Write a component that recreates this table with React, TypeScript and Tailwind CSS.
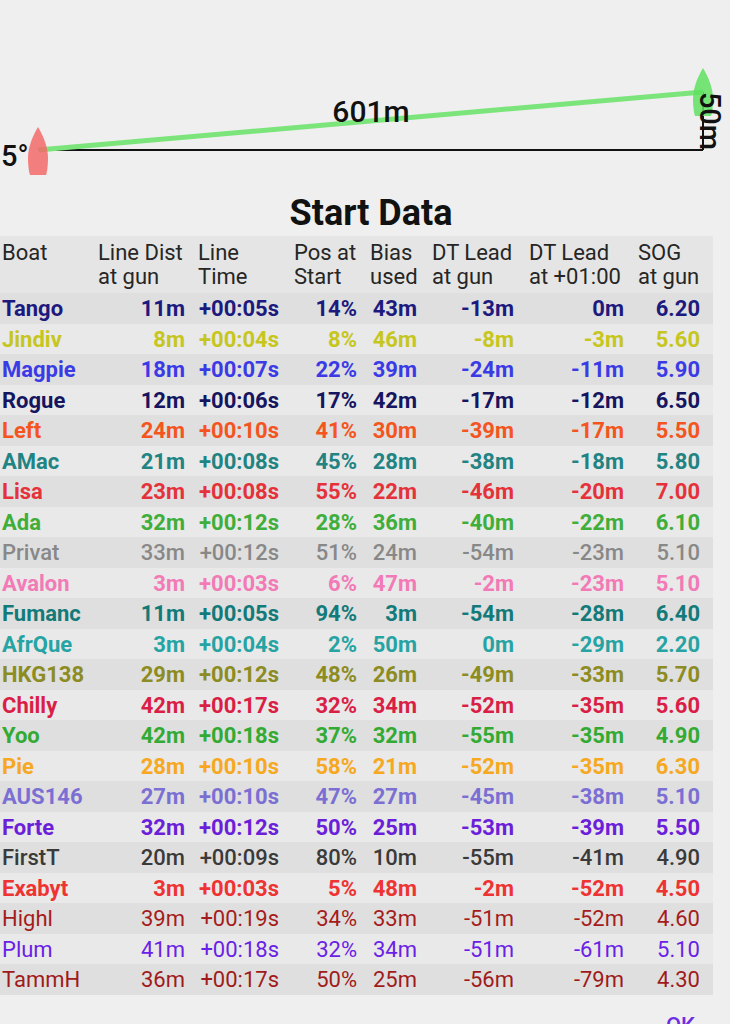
import React from 'react';

type Weight = 'bold' | 'medium' | 'normal';

interface BoatRow {
  name: string;
  dist: string;
  time: string;
  pos: string;
  bias: string;
  leadGun: string;
  leadMin: string;
  sog: string;
  color: string;
  weight: Weight;
}

const rows: BoatRow[] = [
  { name: 'Tango', dist: '11m', time: '+00:05s', pos: '14%', bias: '43m', leadGun: '-13m', leadMin: '0m', sog: '6.20', color: 'text-[#1c1a7e]', weight: 'bold' },
  { name: 'Jindiv', dist: '8m', time: '+00:04s', pos: '8%', bias: '46m', leadGun: '-8m', leadMin: '-3m', sog: '5.60', color: 'text-[#c6c61e]', weight: 'bold' },
  { name: 'Magpie', dist: '18m', time: '+00:07s', pos: '22%', bias: '39m', leadGun: '-24m', leadMin: '-11m', sog: '5.90', color: 'text-[#3b3be6]', weight: 'bold' },
  { name: 'Rogue', dist: '12m', time: '+00:06s', pos: '17%', bias: '42m', leadGun: '-17m', leadMin: '-12m', sog: '6.50', color: 'text-[#151560]', weight: 'bold' },
  { name: 'Left', dist: '24m', time: '+00:10s', pos: '41%', bias: '30m', leadGun: '-39m', leadMin: '-17m', sog: '5.50', color: 'text-[#f4551e]', weight: 'bold' },
  { name: 'AMac', dist: '21m', time: '+00:08s', pos: '45%', bias: '28m', leadGun: '-38m', leadMin: '-18m', sog: '5.80', color: 'text-[#228383]', weight: 'bold' },
  { name: 'Lisa', dist: '23m', time: '+00:08s', pos: '55%', bias: '22m', leadGun: '-46m', leadMin: '-20m', sog: '7.00', color: 'text-[#e5323a]', weight: 'bold' },
  { name: 'Ada', dist: '32m', time: '+00:12s', pos: '28%', bias: '36m', leadGun: '-40m', leadMin: '-22m', sog: '6.10', color: 'text-[#3fae3a]', weight: 'bold' },
  { name: 'Privat', dist: '33m', time: '+00:12s', pos: '51%', bias: '24m', leadGun: '-54m', leadMin: '-23m', sog: '5.10', color: 'text-[#888888]', weight: 'medium' },
  { name: 'Avalon', dist: '3m', time: '+00:03s', pos: '6%', bias: '47m', leadGun: '-2m', leadMin: '-23m', sog: '5.10', color: 'text-[#f27ab6]', weight: 'bold' },
  { name: 'Fumanc', dist: '11m', time: '+00:05s', pos: '94%', bias: '3m', leadGun: '-54m', leadMin: '-28m', sog: '6.40', color: 'text-[#137a7a]', weight: 'bold' },
  { name: 'AfrQue', dist: '3m', time: '+00:04s', pos: '2%', bias: '50m', leadGun: '0m', leadMin: '-29m', sog: '2.20', color: 'text-[#26a3a3]', weight: 'bold' },
  { name: 'HKG138', dist: '29m', time: '+00:12s', pos: '48%', bias: '26m', leadGun: '-49m', leadMin: '-33m', sog: '5.70', color: 'text-[#8c8c22]', weight: 'bold' },
  { name: 'Chilly', dist: '42m', time: '+00:17s', pos: '32%', bias: '34m', leadGun: '-52m', leadMin: '-35m', sog: '5.60', color: 'text-[#da1f47]', weight: 'bold' },
  { name: 'Yoo', dist: '42m', time: '+00:18s', pos: '37%', bias: '32m', leadGun: '-55m', leadMin: '-35m', sog: '4.90', color: 'text-[#33aa33]', weight: 'bold' },
  { name: 'Pie', dist: '28m', time: '+00:10s', pos: '58%', bias: '21m', leadGun: '-52m', leadMin: '-35m', sog: '6.30', color: 'text-[#f6a821]', weight: 'bold' },
  { name: 'AUS146', dist: '27m', time: '+00:10s', pos: '47%', bias: '27m', leadGun: '-45m', leadMin: '-38m', sog: '5.10', color: 'text-[#7b6fd4]', weight: 'bold' },
  { name: 'Forte', dist: '32m', time: '+00:12s', pos: '50%', bias: '25m', leadGun: '-53m', leadMin: '-39m', sog: '5.50', color: 'text-[#6b1fd8]', weight: 'bold' },
  { name: 'FirstT', dist: '20m', time: '+00:09s', pos: '80%', bias: '10m', leadGun: '-55m', leadMin: '-41m', sog: '4.90', color: 'text-[#3a3a3a]', weight: 'medium' },
  { name: 'Exabyt', dist: '3m', time: '+00:03s', pos: '5%', bias: '48m', leadGun: '-2m', leadMin: '-52m', sog: '4.50', color: 'text-[#ee3333]', weight: 'bold' },
  { name: 'Highl', dist: '39m', time: '+00:19s', pos: '34%', bias: '33m', leadGun: '-51m', leadMin: '-52m', sog: '4.60', color: 'text-[#a51c1c]', weight: 'normal' },
  { name: 'Plum', dist: '41m', time: '+00:18s', pos: '32%', bias: '34m', leadGun: '-51m', leadMin: '-61m', sog: '5.10', color: 'text-[#6a21e6]', weight: 'normal' },
  { name: 'TammH', dist: '36m', time: '+00:17s', pos: '50%', bias: '25m', leadGun: '-56m', leadMin: '-79m', sog: '4.30', color: 'text-[#9f1b1b]', weight: 'normal' },
];

const weightClass: Record<Weight, string> = {
  bold: 'font-bold',
  medium: 'font-medium',
  normal: 'font-normal',
};

const gridCols = 'grid grid-cols-[96px_100px_96px_76px_62px_97px_109px_75px]';

const Boat = ({ dx, dy, fill }: { dx: number; dy: number; fill: string }) => (
  <path
    transform={`translate(${dx} ${dy})`}
    d="M38 127 C44 137 48 148 48 158 C48 166 47 172 46 175 L30 175 C29 172 28 166 28 158 C28 148 32 137 38 127 Z"
    fill={fill}
    fillOpacity={0.85}
  />
);

const StartLine = () => (
  <svg width="730" height="190" viewBox="0 0 730 190" className="block">
    <line x1="38" y1="150" x2="703" y2="150" stroke="#111" strokeWidth="2" />
    <line x1="703" y1="92" x2="703" y2="150" stroke="#111" strokeWidth="2" />
    <line x1="38" y1="150" x2="703" y2="92" stroke="#7be57b" strokeWidth="5" />
    <Boat dx={0} dy={0} fill="#f36a6a" />
    <Boat dx={665} dy={-59} fill="#5fe05f" />
    <text x="371" y="122" textAnchor="middle" fontFamily="Roboto, sans-serif" fontWeight="500" fontSize="30" fill="#111">
      601m
    </text>
    <text x="1" y="166" fontFamily="Roboto, sans-serif" fontWeight="500" fontSize="29" fill="#111">
      5°
    </text>
    <text
      transform="translate(700 121) rotate(90)"
      textAnchor="middle"
      fontFamily="Roboto, sans-serif"
      fontWeight="500"
      fontSize="29"
      fill="#111"
    >
      50m
    </text>
  </svg>
);

export default function App() {
  return (
    <div className="min-h-[1024px] w-[730px] overflow-hidden bg-[#efefef] font-[Roboto,sans-serif]">
      <StartLine />

      {/* Title */}
      <div className="h-[46px] pl-[12px] text-center text-[36px] leading-[46px] font-bold text-[#111]">Start Data</div>

      {/* Table */}
      <div className="w-[713px]">
        <div className={`${gridCols} bg-[#e5e5e5] pt-[5px] pb-[4px] pl-[2px] text-[22px] leading-[24px] text-[#262626]`}>
          <div>Boat</div>
          <div>Line Dist<br />at gun</div>
          <div>Line<br />Time</div>
          <div>Pos at<br />Start</div>
          <div>Bias<br />used</div>
          <div>DT Lead<br />at gun</div>
          <div>DT Lead<br />at +01:00</div>
          <div>SOG<br />at gun</div>
        </div>

        {rows.map((r, i) => (
          <div
            key={r.name}
            className={`${gridCols} pl-[2px] pt-[2px] text-[22px] leading-[28.5px] ${r.color} ${weightClass[r.weight]} ${
              i % 2 === 0 ? 'bg-[#dfdfdf]' : 'bg-[#e9e9e9]'
            }`}
          >
            <div>{r.name}</div>
            <div className="pr-[13px] text-right">{r.dist}</div>
            <div className="pr-[15px] text-right">{r.time}</div>
            <div className="pr-[13px] text-right">{r.pos}</div>
            <div className="pr-[15px] text-right">{r.bias}</div>
            <div className="pr-[15px] text-right">{r.leadGun}</div>
            <div className="pr-[14px] text-right">{r.leadMin}</div>
            <div className="pr-[13px] text-right">{r.sog}</div>
          </div>
        ))}
      </div>

      <div className="mt-[16px] pr-[35px] text-right text-[22px] leading-[30px] font-medium text-[#6b2ee0]">OK</div>
    </div>
  );
}
